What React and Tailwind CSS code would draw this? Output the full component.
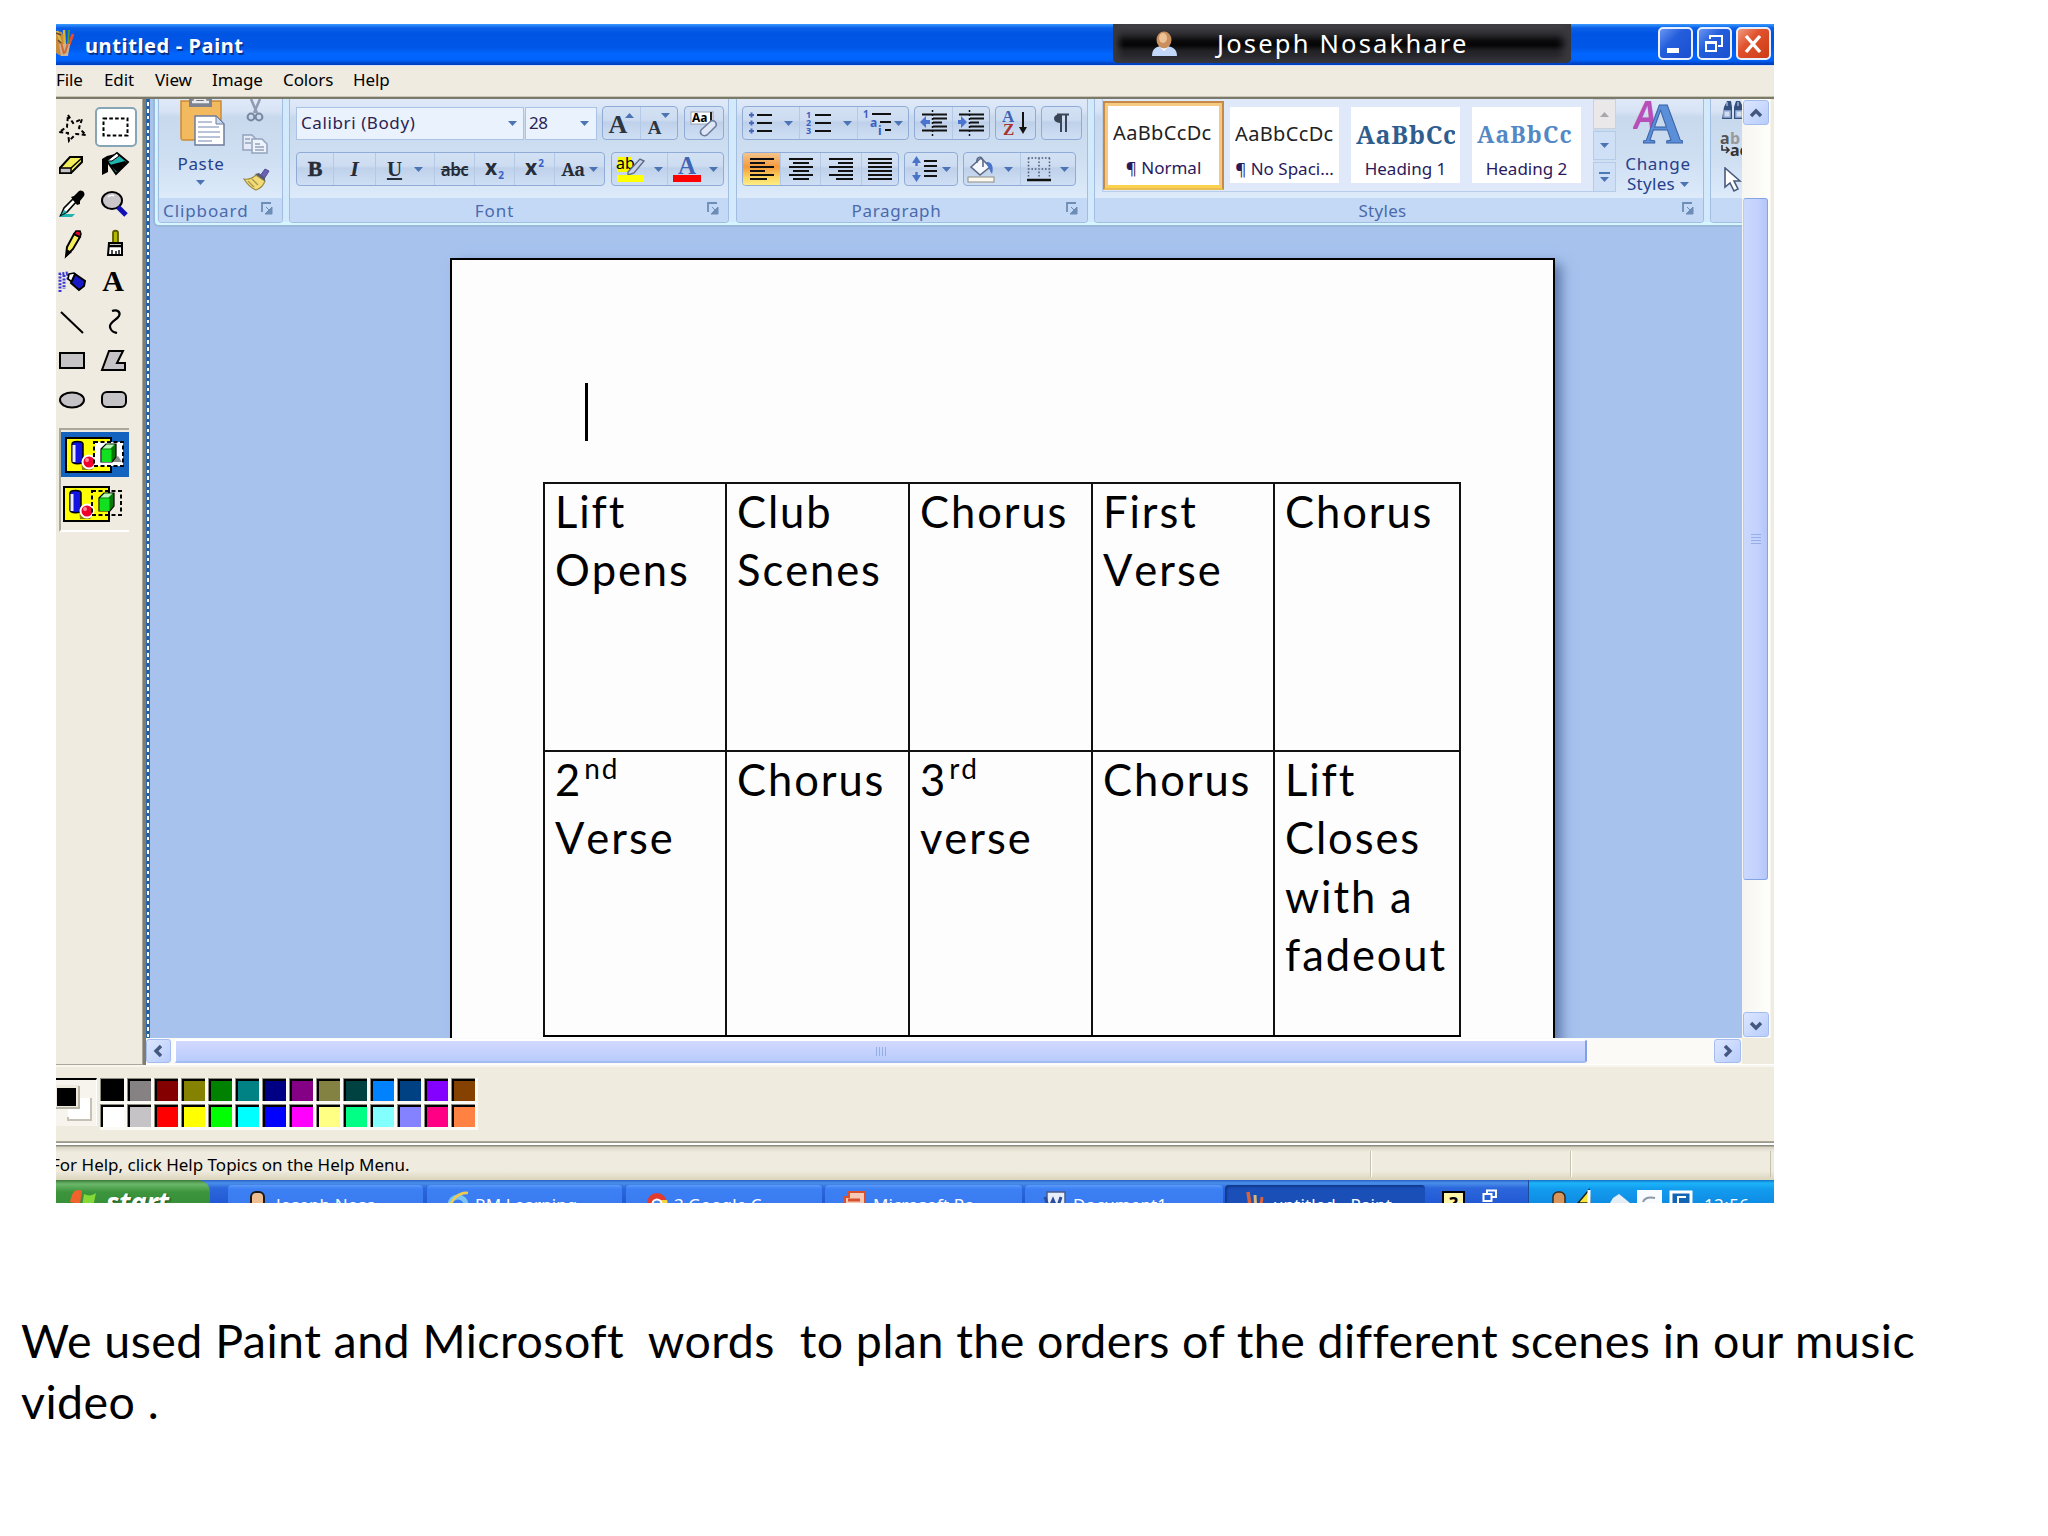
const topColors = [
    "#000000", "#868284", "#840000", "#848200", "#008200", "#008284", "#000084",
    "#840084", "#848242", "#004142", "#0082ff", "#004184", "#8400ff", "#844100",
];

const bottomColors = [
    "#ffffff", "#c6c3c6", "#ff0000", "#ffff00", "#00ff00", "#00ffff", "#0000ff",
    "#ff00ff", "#ffff84", "#00ff84", "#84ffff", "#8482ff", "#ff0084", "#ff8242",
];

const menuItems = [
    { label: "File", css: "w-[48px]" },
    { label: "Edit", css: "w-[51px]" },
    { label: "View", css: "w-[57px]" },
    { label: "Image", css: "w-[71px]" },
    { label: "Colors", css: "w-[70px]" },
    { label: "Help", css: "w-[60px]" },
];

export default function App() {

    return (

        <div className="w-[2048px] h-[1536px] bg-white overflow-hidden pt-6 font-['Noto_Sans',sans-serif] text-black">

            <div className="ml-14 w-[1718px] h-[1179px] flex flex-col overflow-hidden bg-[#efebde]">

                <TitleBar />

                {/* MENU */}
                <div className="h-[34px] shrink-0 flex items-center pb-[4px] text-[17px] leading-none border-b-2 border-[#7b7969] bg-[#efebe0] whitespace-nowrap shadow-[inset_0_1px_0_#d6e3f7,inset_0_-1px_0_#c9c5b4]">
                    {menuItems.map((item) => (
                        <span key={item.label} className={`${item.css} shrink-0 tracking-[-0.1px]`}>
                            {item.label}
                        </span>
                    ))}
                </div>

                {/* BODY */}
                <div className="h-[966px] shrink-0 flex">

                    <ToolBox />

                    <div className="w-[3px] shrink-0 bg-[#7f7d72]" />

                    <div className="w-[1628px] flex flex-col">

                        <div className="h-[939px] flex shrink-0">

                            <div className="w-[4px] shrink-0 border-x border-[#2c6aab] bg-[repeating-linear-gradient(180deg,#1f5c9c_0px,#1f5c9c_3.4px,#fff_3.4px,#fff_6.8px)]" />

                            <div className="w-[1592px] shrink-0 flex flex-col overflow-hidden">
                                <Ribbon />
                                <Document />
                            </div>

                            <VerticalScroll />

                        </div>

                        <HorizontalScroll />

                    </div>

                </div>

                <ColorBox />

                {/* STATUS */}
                <div className="h-[38px] shrink-0 flex text-[17px] border-t border-[#9c9a8c] whitespace-nowrap bg-[linear-gradient(180deg,#fff_0px,#fff_2px,#8c8a7e_2px,#8c8a7e_3px,#d8d4c4_4px,#efebde_9px,#efebde_28px,#ddd7c0_36px)]">
                    <span className="w-[1314px] shrink-0 -ml-[5px] pt-[10px] leading-[24px] tracking-[0px]">
                        For Help, click Help Topics on the Help Menu.
                    </span>
                    <div className="w-[200px] h-[26px] mt-2 ml-[5px] border-l border-[#c5c1ae] shadow-[inset_1px_0_0_#fff]" />
                    <div className="w-[201px] h-[26px] mt-2 border-x border-[#c5c1ae] shadow-[inset_1px_0_0_#fff]" />
                </div>

                <TaskBar />

            </div>

            {/* CAPTION */}
            <p className="mt-[107px] ml-[21px] w-[1990px] font-['Lato',sans-serif] text-[46.5px] leading-[61.4px] tracking-[0.46px] whitespace-pre">
                {"We used Paint and Microsoft  words  to plan the orders of the different scenes in our music\nvideo ."}
            </p>

        </div>
    );
}

function TitleBar() {

    return (

        <div className="h-[41px] shrink-0 flex bg-[linear-gradient(180deg,#3a9bff_0px,#0a5fe8_4px,#0054e3_10px,#0057e8_24px,#0066ff_30px,#0063fb_36px,#0040c0_40px)]">

            <svg width="20" height="30" viewBox="0 0 20 30" className="mt-1 shrink-0">
                <path d="M0 3l6 1 2 6 3 14-6 4-5-3z" fill="#c98a3c" />
                <path d="M1 3l5 15M8 2l1 17" stroke="#d8b83c" strokeWidth="2.4" />
                <path d="M17 6l-6 16" stroke="#e84c2c" strokeWidth="3" />
                <path d="M13 2l-1 14" stroke="#4a9a3c" strokeWidth="2" />
                <path d="M3 16h11l-2 12H5z" fill="#c8b29a" />
                <path d="M5 14l3 12M12 15l-3 10" stroke="#d66a2c" strokeWidth="2" />
                <path d="M0 5l5 2M2 12l3 3" stroke="#5a4a3c" strokeWidth="1.5" />
            </svg>

            <span className="ml-[9px] w-[1028px] shrink-0 text-[20px] font-bold text-white leading-[43px] tracking-[0.62px] [text-shadow:1.5px_1.5px_0_#0a2f86]">
                untitled - Paint
            </span>

            {/* USER BADGE */}
            <div className="w-[458px] h-[39px] shrink-0 rounded-b-[5px] flex items-center bg-[linear-gradient(180deg,#4a4a4e_0px,#2d2d31_10px,#0a0a0c_17px,#050506_21px,#222226_27px,#333338_39px)] shadow-[inset_6px_0_6px_#3a3a3f,inset_-8px_0_8px_#3a3a3f]">
                <svg width="28" height="28" viewBox="0 0 28 28" className="ml-[38px] shrink-0">
                    <path d="M1 26c0-8 5-10 12-10s13 2 13 10z" fill="#c3d7fb" />
                    <path d="M8 16l5 5 5-5z" fill="#fff" />
                    <ellipse cx="13" cy="10" rx="7.5" ry="8.5" fill="#c98f5e" />
                    <ellipse cx="12" cy="8" rx="4" ry="5" fill="#ecc296" />
                </svg>
                <span className="ml-[38px] text-[25.5px] leading-none text-white tracking-[2.2px] whitespace-nowrap">
                    Joseph Nosakhare
                </span>
            </div>

            <div className="ml-[87px] mt-[3px] flex gap-1">
                <WindowButton css="bg-[linear-gradient(135deg,#6a95f2,#245edc_40%,#1b4fd0)]">
                    <path d="M8 21h12v5H8z" fill="#fff" />
                </WindowButton>
                <WindowButton css="bg-[linear-gradient(135deg,#6a95f2,#245edc_40%,#1b4fd0)]">
                    <path d="M12 12V9h12v10h-4M12 9h12" fill="none" stroke="#fff" strokeWidth="2" />
                    <path d="M8 15h10v9H8zM8 16h10" fill="none" stroke="#fff" strokeWidth="2" />
                </WindowButton>
                <WindowButton css="bg-[linear-gradient(135deg,#f09a80,#e0512c_40%,#cc3d16)]">
                    <path d="M9 9l14 16M23 9L9 25" stroke="#fff" strokeWidth="3.4" />
                </WindowButton>
            </div>

        </div>
    );
}

function WindowButton({ css, children }) {

    return (

        <div className={`w-[35px] h-[33px] shrink-0 rounded-[5px] border-2 border-[#e9f0ff] ${css}`}>
            <svg width="31" height="29" viewBox="1 2 31 29">
                {children}
            </svg>
        </div>
    );
}

function ToolBox() {

    return (

        <div className="w-[87px] shrink-0 bg-[#efebe0] border-r border-b border-[#aca899] pt-[7px]">

            {/* TOOLS */}
            <div className="grid grid-cols-[39px_42px] auto-rows-[39.2px]">

                <Tool>
                    <path d="M12 6l5 8 9-4-3 9 7 7-10-1-7 7-1-8-9-1 8-5z" fill="none" stroke="#000" strokeWidth="2" strokeDasharray="4 2.5" />
                </Tool>

                <div className="w-[42px] h-[40px] mt-px rounded-[5px] border-2 border-[#86a6b8] bg-white flex items-center justify-center">
                    <svg width="28" height="20" viewBox="0 0 28 20">
                        <rect x="1.5" y="1.5" width="24" height="17" fill="none" stroke="#000" strokeWidth="2" strokeDasharray="3.6 2.2" />
                    </svg>
                </div>

                <Tool>
                    <path d="M4 20L14 9h12v5L15 25H4z" fill="#f4ee5a" stroke="#000" strokeWidth="2" />
                    <path d="M4 20h11v5H4z" fill="#c6c3c6" stroke="#000" strokeWidth="1.5" />
                    <path d="M15 20L26 10" stroke="#000" strokeWidth="1.5" />
                </Tool>
                <Tool right>
                    <path d="M2 27V11l5-3 8-2-7 7v11z" fill="#000" />
                    <path d="M7 13L17 5l11 9-12 12z" fill="#1fb4b0" stroke="#000" strokeWidth="2" />
                    <path d="M7 13L17 5l2 3-7 5z" fill="#fff" stroke="#000" />
                    <path d="M10 17l15-4 2 3-10 8z" fill="#000" />
                </Tool>

                <Tool>
                    <path d="M4 27h15l-3 3H3z" fill="#1fb4b0" />
                    <path d="M5 28l3-7 9-9 3 3-9 10z" fill="#fff" stroke="#000" strokeWidth="1.6" />
                    <path d="M5 28l3-5 3 2z" fill="#1fb4b0" />
                    <path d="M15 10l3-1 5-5c3-2 7 2 5 5l-4 5 0 3-3 1z" fill="#000" />
                </Tool>
                <Tool right>
                    <ellipse cx="12" cy="13.500" rx="10" ry="8.500" fill="#c9c5c8" stroke="#000" strokeWidth="2" />
                    <path d="M8 10c2-2 5-2 6-1" stroke="#fff" strokeWidth="1.5" fill="none" />
                    <path d="M18 20l8 8" stroke="#1010b8" strokeWidth="5" />
                </Tool>

                <Tool>
                    <path d="M10 29l1-9 7-13 6 3-7 12z" fill="#f4ee5a" stroke="#000" strokeWidth="2" />
                    <path d="M18 7l2-3h4l1 3-1 3z" fill="#e4002c" stroke="#000" strokeWidth="1.5" />
                    <path d="M10 30v-8l6 3z" fill="#000" />
                </Tool>
                <Tool right>
                    <path d="M13 16V6c0-3 5-3 5 0v10z" fill="#b5b800" stroke="#5a5a00" strokeWidth="1.8" />
                    <path d="M9 16h13v12H8z" fill="#fff" stroke="#000" strokeWidth="2" />
                    <path d="M9 19h13" stroke="#000" strokeWidth="2.5" />
                    <path d="M12 23v5M16 24v4M19 23v5" stroke="#000" strokeWidth="1.4" />
                </Tool>

                <Tool>
                    <path d="M4 26V8l8-1M8 9v14M12 8v6" stroke="#3838d8" strokeWidth="3" strokeDasharray="2 1.4" fill="none" />
                    <path d="M13 8l5-1 2 2-4 7-4-3z" fill="#fff" stroke="#000" strokeWidth="1.6" />
                    <path d="M19 8l10 7-1 5-5 4-8-7z" fill="#1818c8" stroke="#000" strokeWidth="2" />
                </Tool>
                <Tool right>
                    <text x="13" y="25" textAnchor="middle" fontFamily="Liberation Serif, serif" fontWeight="bold" fontSize="30">A</text>
                </Tool>

                <Tool>
                    <path d="M5 7l22 21" stroke="#000" strokeWidth="2" />
                </Tool>
                <Tool right>
                    <path d="M12 6c5-2 9 1 7 5s-10 6-9 11 4 5 7 6" fill="none" stroke="#000" strokeWidth="2.2" />
                </Tool>

                <Tool>
                    <rect x="4" y="9" width="24" height="15" fill="#c6c3c6" stroke="#000" strokeWidth="2" />
                </Tool>
                <Tool right>
                    <path d="M9 7h14l-6 12h8v7H2z" fill="#c6c3c6" stroke="#000" strokeWidth="2" />
                </Tool>

                <Tool>
                    <ellipse cx="16" cy="17" rx="12" ry="7.5" fill="#c6c3c6" stroke="#000" strokeWidth="2" />
                </Tool>
                <Tool right>
                    <rect x="2" y="9" width="24" height="15" rx="5" fill="#c6c3c6" stroke="#000" strokeWidth="2" />
                </Tool>

            </div>

            {/* OPTIONS */}
            <div className="mt-[8px] ml-[3px] w-[70px] h-[104px] border-t-2 border-l-2 border-[#aca899] border-b-2 border-b-white pt-[2px]">
                <div className="w-[68px] h-[45px] bg-[#1464bf] pl-1 pt-[5px]">
                    <Shapes filled />
                </div>
                <div className="pl-0.5 pt-[9px]">
                    <Shapes />
                </div>
            </div>

        </div>
    );
}

function Tool({ right, children }) {

    return (

        <svg width="32" height="34" viewBox="0 0 32 34" className={`mt-[3px] shrink-0 ${right ? "ml-[5px]" : ""}`}>
            {children}
        </svg>
    );
}

function Shapes({ filled }) {

    return (

        <svg width="62" height="37" viewBox="0 0 62 37">
            <rect x="1" y="1" width="45" height="34" fill="#ffff00" stroke="#000" strokeWidth="2" />
            <path d="M16 20l14 9-3 4H17z" fill="#8a8600" />
            <path d="M7 7c0-3.500 11-3.500 11 0v17c0 3.500-11 3.500-11 0z" fill="#1414e0" stroke="#000" strokeWidth="1.5" />
            <path d="M9 8v17" stroke="#e8e8ff" strokeWidth="3" />
            {filled && <rect x="30" y="5" width="28" height="24" fill="#fff" />}
            <circle cx="24" cy="25" r="6.5" fill="#f0002c" stroke="#fff" strokeWidth="2" />
            <circle cx="22" cy="23" r="2" fill="#ff8aa0" />
            <rect x="29" y="5" width="29" height="24" fill="none" stroke="#000" strokeWidth="2" strokeDasharray="4 2.5" />
            <path d="M45 25h12l-4-6z" fill="#8c8c8c" opacity={filled ? 1 : 0} />
            <path d="M36 12l5-5h10v13l-4 5H36z" fill="#067a06" stroke="#000" strokeWidth="1.2" />
            <path d="M36.500 12.500h10V25h-10z" fill="#10e020" />
            <path d="M37.500 11.500l4-4h8l-4 4z" fill="#b8f8b8" />
        </svg>
    );
}

function Ribbon() {

    return (

        <div className="h-[128px] shrink-0 pl-[3px] bg-[#a6c2ed] overflow-hidden">

            <div className="h-[128px] w-[1600px] pl-[5px] flex rounded-bl-md border-l-2 border-b-2 border-[#9ab8d8] bg-[#d3e9fc] shadow-[inset_2px_-3px_0_#d6f6ff]">

                {/* CLIPBOARD */}
                <Group css="w-[125px] -ml-[2px]" label="Clipboard" labelCss="pl-[4px] text-left tracking-[0.9px]">

                    <div className="flex">

                        <div className="w-[83px] flex flex-col items-center">
                            <svg width="46" height="47" viewBox="0 0 46 47" className="ml-[2px]">
                                <path d="M2 2h40v37c0 2-1 2-3 2H4c-2 0-2-1-2-3z" fill="#f3b95e" stroke="#c98b36" strokeWidth="1.5" />
                                <path d="M10 0h23v8H10z" fill="#7d8490" />
                                <path d="M13 3h17M16 0h10v3H16z" stroke="#e8eaf0" strokeWidth="2.4" />
                                <path d="M16 17h21l8 8v21H16z" fill="#fff" stroke="#6d7c9c" strokeWidth="1.5" />
                                <path d="M37 17v8h8z" fill="#cfdaf0" stroke="#6d7c9c" />
                                <path d="M19 23h14M19 28h21M19 33h22M19 38h22M19 42h14" stroke="#a3b0cc" strokeWidth="1.6" />
                            </svg>
                            <span className="mt-[5px] ml-px text-[17px] leading-[26px] tracking-[0.7px] text-[#27408b]">
                                Paste
                            </span>
                            <span className="mt-[3px]"><Arrow /></span>
                        </div>

                        <div className="flex flex-col">
                            <svg width="28" height="26" viewBox="0 0 28 26">
                                <path d="M9 0l6 14M18 0l-6 14" stroke="#8f9bb0" strokeWidth="2.5" />
                                <circle cx="9" cy="18" r="3.4" fill="none" stroke="#78869f" strokeWidth="2" />
                                <circle cx="17" cy="18" r="3.4" fill="none" stroke="#78869f" strokeWidth="2" />
                            </svg>
                            <svg width="28" height="22" viewBox="0 0 28 22" className="mt-2">
                                <path d="M1 2h9l4 4v11H1z" fill="#e4ebf6" stroke="#93a2bd" strokeWidth="1.5" />
                                <path d="M10 6h10l5 5v9H10z" fill="#eef3fb" stroke="#93a2bd" strokeWidth="1.5" />
                                <path d="M3 6h5M3 10h6M13 11h5M13 14h9M13 17h9" stroke="#93a2bd" strokeWidth="1.5" />
                            </svg>
                            <svg width="28" height="26" viewBox="0 0 28 26" className="mt-3">
                                <path d="M18 9l5-7 4 2-5 8z" fill="#6a63b5" stroke="#514b96" />
                                <path d="M2 12c5 1 9-1 12-4l9 6c-2 6-6 8-9 9C9 21 5 17 2 12z" fill="#f3dc78" stroke="#9b8a3c" strokeWidth="1.2" />
                                <path d="M14 8l9 6M6 14l6 6M10 12l6 6" stroke="#a99a50" strokeWidth="1.4" />
                                <path d="M13 7l4-1 6 5v3z" fill="#565a72" />
                            </svg>
                        </div>

                    </div>

                </Group>

                {/* FONT */}
                <Group css="w-[440px] ml-[6px]" label="Font" labelCss="pr-[20px] text-center tracking-[0.9px]">

                    <div className="pt-[7px] pl-[6px] flex flex-col gap-[12px]">

                        <div className="h-[34px] flex items-center">
                            <div className="w-[228px] h-[33px] border border-[#a9c2e6] bg-[#eaf2fd] flex items-center justify-between pl-1 pr-[6px] text-[17px] tracking-[0.6px] text-[#2b2350]">
                                Calibri (Body)
                                <Arrow />
                            </div>
                            <div className="w-[72px] h-[33px] ml-[1px] border border-[#a9c2e6] bg-[#eaf2fd] flex items-center justify-between pl-[3px] pr-[7px] text-[17px] tracking-[-0.4px] text-[#2b2350]">
                                28
                                <Arrow />
                            </div>
                            <Box css="ml-[5px] w-[76px]">
                                <Cell css="w-[38px]">
                                    <span className="font-['Liberation_Serif',serif] font-bold text-[26px] text-[#2c3540] mt-1">A</span>
                                    <span className="-ml-0.5 mb-4"><Arrow up /></span>
                                </Cell>
                                <Cell css="w-[36px]">
                                    <span className="font-['Liberation_Serif',serif] font-bold text-[19px] text-[#2c3540] mt-2">A</span>
                                    <span className="mb-4"><Arrow /></span>
                                </Cell>
                            </Box>
                            <Box css="ml-[6px] w-[40px]">
                                <svg width="32" height="30" viewBox="0 0 32 30" className="mx-auto">
                                    <rect x="3" y="4" width="22" height="12" fill="#fff" stroke="#9aa4b4" />
                                    <text x="4" y="14" fontSize="12" fontWeight="bold" fontFamily="Noto Sans">Aa</text>
                                    <path d="M23 4v11" stroke="#222" strokeWidth="2" />
                                    <path d="M13 22l10-9c4-1 6 2 5 5l-9 9c-4 2-8-1-6-5z" fill="#dfe6f6" stroke="#6c7c9c" strokeWidth="1.5" />
                                </svg>
                            </Box>
                        </div>

                        <div className="h-[34px] flex items-center">
                            <Box css="w-[309px] text-[#262c38]">
                                <Cell css="w-[37px]">
                                    <span className="font-['Liberation_Serif',serif] font-bold text-[22px] [-webkit-text-stroke:0.5px]">B</span>
                                </Cell>
                                <Cell css="w-[42px]">
                                    <span className="font-['Liberation_Serif',serif] font-bold italic text-[22px]">I</span>
                                </Cell>
                                <Cell css="w-[59px] gap-3">
                                    <span className="font-['Liberation_Serif',serif] font-bold underline text-[21px]">U</span>
                                    <Arrow />
                                </Cell>
                                <Cell css="w-[40px]">
                                    <span className="line-through text-[17px] font-semibold tracking-[-0.6px]">abc</span>
                                </Cell>
                                <Cell css="w-[40px]">
                                    <span className="font-bold text-[21px] -mt-1">x</span>
                                    <span className="font-bold text-[10px] text-[#3a62c4] mt-3 ml-px">2</span>
                                </Cell>
                                <Cell css="w-[40px]">
                                    <span className="font-bold text-[21px] -mt-1">x</span>
                                    <span className="font-bold text-[10px] text-[#3a62c4] mb-3 ml-px">2</span>
                                </Cell>
                                <Cell css="w-[49px] gap-1">
                                    <span className="font-['Noto_Serif',serif] font-bold text-[18px] tracking-[-0.5px]">Aa</span>
                                    <Arrow />
                                </Cell>
                            </Box>
                            <Box css="ml-[6px] w-[113px]">
                                <Cell css="w-[56px] gap-2">
                                    <svg width="30" height="30" viewBox="0 0 30 30">
                                        <rect x="1" y="3" width="15" height="15" fill="#f8f800" />
                                        <text x="0" y="15" fontSize="16" fontFamily="Noto Sans">ab</text>
                                        <path d="M12 18l12-13 4 2-10 12-6 2z" fill="#c8d4ea" stroke="#5d6b86" strokeWidth="1.4" />
                                        <rect x="1" y="21" width="27" height="7" fill="#ffff00" />
                                    </svg>
                                    <Arrow />
                                </Cell>
                                <Cell css="w-[55px] gap-2">
                                    <svg width="28" height="30" viewBox="0 0 28 30">
                                        <text x="14" y="20" textAnchor="middle" fontSize="25" fontWeight="bold" fill="#3f64b4" fontFamily="Liberation Serif">A</text>
                                        <rect x="0" y="21" width="28" height="7" fill="#fe0000" />
                                    </svg>
                                    <Arrow />
                                </Cell>
                            </Box>
                        </div>

                    </div>

                </Group>

                {/* PARAGRAPH */}
                <Group css="w-[352px] ml-[7px]" label="Paragraph" labelCss="pr-[22px] text-center tracking-[0.7px]">

                    <div className="pt-[7px] pl-[5px] flex flex-col gap-[12px]">

                        <div className="h-[34px] flex items-center">
                            <Box css="w-[167px]">
                                <Cell css="w-[57px] gap-[11px]">
                                    <svg width="24" height="24" viewBox="0 0 24 24">
                                        <path d="M8 4h15M8 12h15M8 20h15" stroke="#111" strokeWidth="2" />
                                        <path d="M0 4h5M0 12h5M0 20h5M2.500 1.500v5M2.500 9.500v5M2.500 17.500v5" stroke="#4a68c0" strokeWidth="2" />
                                    </svg>
                                    <Arrow />
                                </Cell>
                                <Cell css="w-[58px] gap-[11px]">
                                    <svg width="26" height="24" viewBox="0 0 26 24">
                                        <path d="M9 4h16M9 12h16M9 20h16" stroke="#111" strokeWidth="2" />
                                        <text x="0" y="7" fontSize="9" fontWeight="bold" fill="#3c5ec0">1</text>
                                        <text x="0" y="15" fontSize="9" fontWeight="bold" fill="#3c5ec0">2</text>
                                        <text x="0" y="23" fontSize="9" fontWeight="bold" fill="#3c5ec0">3</text>
                                    </svg>
                                    <Arrow />
                                </Cell>
                                <Cell css="w-[50px] gap-px">
                                    <svg width="30" height="26" viewBox="0 0 30 26">
                                        <path d="M9 4h19M17 12h11M22 20h6" stroke="#111" strokeWidth="2" />
                                        <text x="0" y="8" fontSize="10" fontWeight="bold" fill="#3c5ec0">1</text>
                                        <text x="7" y="17" fontSize="12" fontWeight="bold" fill="#3c5ec0">a</text>
                                        <text x="15" y="25" fontSize="12" fontWeight="bold" fill="#3c5ec0">i</text>
                                    </svg>
                                    <Arrow />
                                </Cell>
                            </Box>
                            <Box css="ml-[5px] w-[76px]">
                                <Cell css="w-[38px]"><Indent /></Cell>
                                <Cell css="w-[36px]"><Indent right /></Cell>
                            </Box>
                            <Box css="ml-[5px] w-[41px]">
                                <svg width="28" height="28" viewBox="0 0 28 28" className="mx-auto">
                                    <text x="0" y="13" fontSize="17" fontWeight="bold" fill="#3d62b4" fontFamily="Liberation Serif">A</text>
                                    <text x="1" y="26" fontSize="17" fontWeight="bold" fill="#a8322c" fontFamily="Liberation Serif">Z</text>
                                    <path d="M21 3v20" stroke="#111" strokeWidth="2" />
                                    <path d="M17 18h8l-4 7z" fill="#111" />
                                </svg>
                            </Box>
                            <Box css="ml-[5px] w-[41px]">
                                <svg width="20" height="22" viewBox="0 0 20 22" className="mx-auto">
                                    <path d="M8 2C0 2 0 11 8 11z" fill="#3a4658" />
                                    <path d="M5 2.500h12M9 2v18M14 2v18" stroke="#3a4658" strokeWidth="2" />
                                </svg>
                            </Box>
                        </div>

                        <div className="h-[34px] flex items-center">
                            <Box css="w-[157px]">
                                <Cell css="w-[38px] bg-[linear-gradient(180deg,#f3c58d_0px,#f59a3c_14px,#fbd35e_24px,#fdf08a_33px)]"><Lines d="M1 3h24M1 7h15M1 11h24M1 15h15M1 19h24M1 23h17" /></Cell>
                                <Cell css="w-[40px]"><Lines d="M1 3h24M5 7h16M1 11h24M5 15h16M1 19h24M5 23h16" /></Cell>
                                <Cell css="w-[41px]"><Lines d="M1 3h24M10 7h15M1 11h24M10 15h15M1 19h24M8 23h17" /></Cell>
                                <Cell css="w-[36px]"><Lines d="M1 3h24M1 7h24M1 11h24M1 15h24M1 19h24M1 23h24" /></Cell>
                            </Box>
                            <Box css="ml-[5px] w-[54px]">
                                <Cell css="w-[52px] gap-[3px]">
                                    <svg width="28" height="28" viewBox="0 0 28 28">
                                        <path d="M13 6h13M13 11h13M13 16h13M13 21h13" stroke="#111" strokeWidth="2" />
                                        <path d="M5.500 3v8M5.500 17v8" stroke="#4a74c8" strokeWidth="2.4" />
                                        <path d="M1 8l4.500-7L10 8zM1 20l4.500 7 4.500-7z" fill="#4a74c8" />
                                    </svg>
                                    <Arrow />
                                </Cell>
                            </Box>
                            <Box css="ml-[5px] w-[113px]">
                                <Cell css="w-[57px] gap-[7px] pr-1">
                                    <svg width="30" height="28" viewBox="0 0 30 28">
                                        <path d="M4 12L14 3l9 9-10 8z" fill="#f4f7fc" stroke="#5c6a86" strokeWidth="1.6" />
                                        <path d="M10 8c-1-7 6-8 6-1v5" fill="none" stroke="#5c6a86" strokeWidth="1.6" />
                                        <path d="M19 7c6-1 8 5 6 12-2-2-2-5-4-7z" fill="#4a74c8" />
                                        <rect x="1" y="22" width="26" height="5" fill="#fbf8ee" stroke="#8d8d84" />
                                    </svg>
                                    <Arrow />
                                </Cell>
                                <Cell css="w-[54px] gap-[9px]">
                                    <svg width="24" height="26" viewBox="0 0 24 26">
                                        <path d="M1 2h22M1 13h22M1.500 2v20M12 2v20M22.500 2v20" stroke="#4e5a78" strokeWidth="1.5" strokeDasharray="1.6 1.800" />
                                        <path d="M0 24h24" stroke="#111" strokeWidth="2.4" />
                                    </svg>
                                    <Arrow />
                                </Cell>
                            </Box>
                        </div>

                    </div>

                </Group>

                {/* STYLES */}
                <Group css="w-[610px] ml-[6px]" label="Styles" labelCss="pr-[24px] text-center tracking-[0.3px]">

                    <div className="flex">

                        <div className="ml-[7px] w-[491px] h-[93px] shrink-0 flex border-l border-b border-[#b8cde9] bg-[#dfe9f9]">
                            <div className="mt-[2px] w-[121px] h-[89px] shrink-0 border-2 border-[#c58a45] border-b-[#e8bd55]">
                                <div className="w-full h-full border-[3px] border-[#f6c983] border-b-[#fbd14e]">
                                    <StyleCard sample="AaBbCcDc" name="¶ Normal" sampleCss="text-[20px] text-[#222] tracking-[0.35px]" />
                                </div>
                            </div>
                            <div className="mt-2 ml-[6px] w-[109px] h-[76px]">
                                <StyleCard sample="AaBbCcDc" name="¶ No Spaci..." sampleCss="text-[20px] text-[#222] tracking-[0.35px]" />
                            </div>
                            <div className="mt-2 ml-[12px] w-[109px] h-[76px]">
                                <StyleCard sample="AaBbCc" name="Heading 1" sampleCss="font-['Noto_Serif','DejaVu_Serif',serif] font-bold text-[25px] text-[#2f5d8f] tracking-[0.7px]" />
                            </div>
                            <div className="mt-2 ml-[12px] w-[109px] h-[76px]">
                                <StyleCard sample="AaBbCc" name="Heading 2" sampleCss="font-['Noto_Serif','DejaVu_Serif',serif] font-bold text-[23px] text-[#5488c4] tracking-[1.1px]" />
                            </div>
                        </div>

                        <div className="w-[23px] shrink-0 flex flex-col gap-[2px]">
                            <div className="h-[30px] bg-[#ebe8ea] border border-[#ccd2dd] flex items-center justify-center"><Arrow up gray /></div>
                            <div className="h-[29px] bg-[#cfe0f6] border border-[#b4cbe9] flex items-center justify-center"><Arrow /></div>
                            <div className="h-[30px] bg-[#cfe0f6] border border-[#b4cbe9] flex flex-col gap-[3px] items-center justify-center">
                                <div className="w-[11px] h-[2px] bg-[#4c7ab8]" />
                                <Arrow />
                            </div>
                        </div>

                        <div className="w-[84px] flex flex-col items-center text-[17px] leading-[20px] tracking-[0.7px] text-[#27408b]">
                            <svg width="50" height="46" viewBox="0 0 50 46">
                                <text x="0" y="30" fontSize="40" fontWeight="bold" fill="#b84fb8" fontFamily="Liberation Sans" fontStyle="italic" textLength="25" lengthAdjust="spacingAndGlyphs">A</text>
                                <text x="10" y="44" fontSize="56" fontWeight="bold" fill="#5b8fd8" stroke="#3a62a8" strokeWidth="1" fontFamily="Liberation Serif">A</text>
                            </svg>
                            <span className="mt-[9px]">Change</span>
                            <span className="flex items-center gap-[5px] tracking-[0.3px]">Styles <Arrow /></span>
                        </div>

                    </div>

                </Group>

                {/* EDITING */}
                <Group css="w-[80px] ml-[6px]" label="" labelCss="">
                    <div className="pl-[9px] flex flex-col">
                        <svg width="28" height="24" viewBox="0 0 28 24">
                            <path d="M2 20l2-12 3-6h4l1 6v12zM14 20V8l2-6h4l3 6 2 12z" fill="#34507f" />
                            <path d="M4 12h6v6H4zM16 12h6v6h-6zM7 3v4M18 3v4" fill="#d2def0" stroke="#9cb2d8" strokeWidth="1.5" />
                        </svg>
                        <svg width="32" height="26" viewBox="0 0 32 26" className="mt-[8px]">
                            <text x="0" y="13" fontSize="16" fontWeight="bold" fill="#555">a</text>
                            <text x="10" y="13" fontSize="16" fontWeight="bold" fill="#999">b</text>
                            <text x="10" y="25" fontSize="16" fontWeight="bold" fill="#333">ac</text>
                            <path d="M2 14v5h7M6 16l3 3-3 3" stroke="#333" strokeWidth="1.6" fill="none" />
                        </svg>
                        <svg width="20" height="26" viewBox="0 0 20 26" className="mt-[10px] ml-1">
                            <path d="M1 1v19l5-4 4 8 4-2-4-8h6z" fill="#fff" stroke="#4a5a7c" strokeWidth="1.6" />
                        </svg>
                    </div>
                </Group>

            </div>

        </div>
    );
}

function Group({ css, label, labelCss, children }) {

    return (

        <div className={`h-[124px] shrink-0 flex flex-col rounded-b-[4px] border border-t-0 border-[#a3bde0] overflow-hidden ${css}`}>
            <div className="h-[99px] shrink-0 bg-[linear-gradient(180deg,#dfe9f8_0px,#d8e4f5_12px,#c9d9ed_18px,#cfdff2_60px,#dceafa_98px)]">
                {children}
            </div>
            <div className="h-[24px] shrink-0 flex items-center bg-[#c4d9f6] pr-2">
                <span className={`flex-1 pt-px text-[17px] leading-[23px] text-[#4a6aab] ${labelCss}`}>
                    {label}
                </span>
                {label && (
                    <svg width="13" height="13" viewBox="0 0 13 13" className="-ml-3 -mt-1 shrink-0">
                        <path d="M1 10V1h9" fill="none" stroke="#6d8db5" strokeWidth="1.8" />
                        <path d="M5 5l5 5M11 5v7H4z" fill="#6d8db5" stroke="#6d8db5" />
                    </svg>
                )}
            </div>
        </div>
    );
}

function Box({ css, children }) {

    return (

        <div className={`h-[34px] shrink-0 flex items-center overflow-hidden rounded-[4px] border border-[#8fabd6] bg-[linear-gradient(180deg,#d3e1f4_0px,#cddcf0_13px,#bfd1ea_15px,#cfe0f5_33px)] ${css}`}>
            {children}
        </div>
    );
}

function Cell({ css, children }) {

    return (

        <div className={`h-full shrink-0 flex items-center justify-center leading-none border-r border-[#b4c9e6] last:border-r-0 ${css}`}>
            {children}
        </div>
    );
}

function Arrow({ up, gray }) {

    return (

        <svg width="9" height="5" viewBox="0 0 9 5" className="shrink-0">
            <path d={up ? "M0 5l4.500-5L9 5z" : "M0 0h9L4.500 5z"} fill={gray ? "#a8a8ac" : "#4c74b4"} />
        </svg>
    );
}

function Lines({ d }) {

    return (

        <svg width="26" height="26" viewBox="0 0 26 26">
            <path d={d} stroke="#111" strokeWidth="1.800" />
        </svg>
    );
}

function Indent({ right }) {

    return (

        <svg width="28" height="26" viewBox="0 0 28 26">
            <path d="M2 4.500h25M13 8.500h14M13 12.500h9M13 16.500h14M2 20.500h25" stroke="#111" strokeWidth="2" />
            <path d="M12.500 0v26" stroke="#111" strokeWidth="1.5" strokeDasharray="2 2" />
            <path d={right ? "M10 12L4 6v4H1v4h3v4z" : "M0 12l6-6v4h4v4H6v4z"} fill="#4a74d0" />
        </svg>
    );
}

function StyleCard({ sample, name, sampleCss }) {

    return (

        <div className="w-full h-full bg-white flex flex-col overflow-hidden whitespace-nowrap">
            <div className={`mx-[5px] mt-[12px] h-[30px] overflow-hidden leading-[30px] ${sampleCss}`}>
                {sample}
            </div>
            <div className="mt-[7px] text-center text-[17px] leading-[26px] text-[#2a1a5c]">
                {name}
            </div>
        </div>
    );
}

function Document() {

    return (

        <div className="h-[811px] shrink-0 bg-[#a6c2ed] pt-[31px] pl-[300px] overflow-hidden">

            <div className="w-[1105px] h-[790px] bg-[#fdfdfe] border-2 border-b-0 border-black pl-[91px] shadow-[8px_4px_12px_-2px_#5a74a8]">

                <div className="ml-[42px] pt-[123px] h-[222px]">
                    <div className="w-[3px] h-[58px] bg-black" />
                </div>

                {/* TABLE */}
                <div className="w-[918px] grid grid-cols-[182px_183px_183px_182px_188px] grid-rows-[268px_285px] border-b-2 border-black font-['Lato',sans-serif] text-[43.5px] leading-[58.4px] tracking-[1.9px] [font-kerning:none] whitespace-pre">
                    <TableCell>{"Lift\nOpens"}</TableCell>
                    <TableCell>{"Club\nScenes"}</TableCell>
                    <TableCell>Chorus</TableCell>
                    <TableCell>{"First\nVerse"}</TableCell>
                    <TableCell last>Chorus</TableCell>
                    <TableCell>
                        2<Sup>nd</Sup>{"\nVerse"}
                    </TableCell>
                    <TableCell>Chorus</TableCell>
                    <TableCell>
                        3<Sup>rd</Sup>{"\nverse"}
                    </TableCell>
                    <TableCell>Chorus</TableCell>
                    <TableCell last>{"Lift\nCloses\nwith a\nfadeout"}</TableCell>
                </div>

            </div>

        </div>
    );
}

function TableCell({ last, children }) {

    return (

        <div className={`pl-[10px] border-l-2 border-t-2 border-[#111] ${last ? "border-r-2" : ""}`}>
            <div className="-mt-[2px]">
                {children}
            </div>
        </div>
    );
}

function Sup({ children }) {

    return (

        <span className="inline-block leading-none text-[28px] -translate-y-[17px] ml-0.5 tracking-[2px]">
            {children}
        </span>
    );
}

function VerticalScroll() {

    return (

        <div className="w-[32px] shrink-0 flex flex-col items-center pr-[5px] pt-px bg-[linear-gradient(90deg,#f6f5f0_0px,#fefefb_28px,#efebde_29px)]">
            <ScrollButton css="w-[26px] h-[25px]" d="M8 14l5-5 5 5" />
            <div className="mt-[73px] w-[25px] h-[682px] rounded-[3px] border border-[#84a4e8] border-l-[#b8cbf6] bg-[linear-gradient(90deg,#cbd8fd,#c3d1fd_60%,#b4c6f7)] flex flex-col items-center justify-center gap-[2px]">
                <div className="w-[10px] h-px bg-[#96aee8]" />
                <div className="w-[10px] h-px bg-[#96aee8]" />
                <div className="w-[10px] h-px bg-[#96aee8]" />
                <div className="w-[10px] h-px bg-[#96aee8]" />
            </div>
            <ScrollButton css="mt-[132px] w-[26px] h-[25px]" d="M8 9l5 5 5-5" />
        </div>
    );
}

function HorizontalScroll() {

    return (

        <div className="h-[27px] shrink-0 flex items-center bg-[linear-gradient(90deg,#fbfaf7_0px,#fbfaf7_1596px,#efebde_1596px)] border-b border-white">
            <ScrollButton css="w-[25px] h-[24px]" d="M15 6l-5 5 5 5" />
            <div className="ml-[3px] w-[1413px] h-[24px] rounded-[3px] border-2 border-[#fff] border-r-[#7f9fe6] border-b-[#a4bcf2] bg-[linear-gradient(180deg,#d3d9ff,#c3d1fd_60%,#b8ccfb)] flex items-center justify-center gap-[2px]">
                <div className="w-px h-[9px] bg-[#96aee8]" />
                <div className="w-px h-[9px] bg-[#96aee8]" />
                <div className="w-px h-[9px] bg-[#96aee8]" />
                <div className="w-px h-[9px] bg-[#96aee8]" />
            </div>
            <ScrollButton css="ml-[127px] w-[27px] h-[24px]" d="M10 6l5 5-5 5" />
        </div>
    );
}

function ScrollButton({ css, d }) {

    return (

        <div className={`shrink-0 rounded-[3px] border border-[#a4bcf0] bg-[linear-gradient(135deg,#dce6ff,#b9cdfb)] flex items-center justify-center ${css}`}>
            <svg width="26" height="22" viewBox="0 0 26 22" className="shrink-0">
                <path d={d} fill="none" stroke="#44587f" strokeWidth="3.4" />
            </svg>
        </div>
    );
}

function ColorBox() {

    return (

        <div className="h-[77px] shrink-0 flex pt-[13px] border-b border-[#aca899] shadow-[inset_0_2px_0_#f8f6ef]">

            <div className="w-[41px] h-[48px] shrink-0 border-t-2 border-black bg-[#f6f4ec] border-r border-r-[#fff]">
                <svg width="40" height="46" viewBox="0 0 40 46">
                    <path d="M12 18h23v22H12z" fill="#fff" />
                    <path d="M35 18v22H12v-3" fill="none" stroke="#c5c1b4" strokeWidth="2" />
                    <path d="M0 5h23v24H0z" fill="#efebde" />
                    <path d="M23 6v22H0" fill="none" stroke="#b8b4a6" strokeWidth="2" />
                    <path d="M1 8h19v18H1z" fill="#000" />
                </svg>
            </div>

            <div className="ml-[3px] flex flex-col">
                <Swatches colors={topColors} />
                <Swatches colors={bottomColors} />
            </div>

        </div>
    );
}

function Swatches({ colors }) {

    return (

        <div className="flex h-[26px]">
            {colors.map((color) => (
                <div key={color} className="w-[27px] h-[26px] pt-px pl-[1px] border-r-[3px] border-b-[3px] border-[#fbfaf5] bg-[#8e8c80]">
                    <div
                        className="h-full border-t-2 border-l-2 border-black"
                        style={{ backgroundColor: color }}
                    />
                </div>
            ))}
        </div>
    );
}

function TaskBar() {

    return (

        <div className="h-[23px] shrink-0 flex items-start overflow-hidden whitespace-nowrap bg-[linear-gradient(180deg,#2a5fc8_0px,#4a90ea_3px,#2c67dc_8px,#2259d4_23px)]">

            {/* START */}
            <div className="w-[154px] h-[40px] shrink-0 flex rounded-tr-[12px] bg-[linear-gradient(180deg,#3a7a3a_0px,#6cb86a_4px,#3c943c_12px,#378f37_24px)]">
                <svg width="30" height="30" viewBox="0 0 30 30" className="ml-3 mt-2">
                    <path d="M2 14C4 3 8 0 14 3L12 16z" fill="#f0642c" />
                    <path d="M16 6c4 2 8 2 12-1l-3 14H14z" fill="#84d838" />
                </svg>
                <span className="ml-2 mt-[5px] text-[28px] leading-[34px] font-bold italic text-white tracking-[-0.4px] [text-shadow:1px_1px_2px_#1c4a1c]">
                    start
                </span>
            </div>

            <Task css="ml-[18px] w-[195px]" text="Joseph Nosa..." icon={
                <>
                    <rect x="5" y="1" width="13" height="18" rx="5" fill="#f0bd90" stroke="#1a1a1a" strokeWidth="2" />
                </>
            } />
            <Task css="ml-[4px] w-[195px]" text="RM Learning ..." icon={
                <>
                    <circle cx="13" cy="14" r="8" fill="none" stroke="#7cc4f4" strokeWidth="5" />
                    <path d="M3 20C6 8 14 1 23 2" fill="none" stroke="#f0cc4c" strokeWidth="2.6" />
                </>
            } />
            <Task css="ml-[4px] w-[196px]" text="3 Google C..." icon={
                <>
                    <circle cx="13" cy="12" r="10" fill="#e23a2c" />
                    <path d="M13 9h10c2 5-1 12-8 13z" fill="#f8d43c" />
                    <path d="M3 12l8 10c-5-1-8-5-8-10z" fill="#3ca34a" />
                    <circle cx="13" cy="13" r="4.500" fill="#4a86e8" stroke="#fff" strokeWidth="2" />
                </>
            } />
            <Task css="ml-[3px] w-[197px]" text="Microsoft Po..." icon={
                <>
                    <path d="M6 1h16v18H2V6h4z" fill="#f7c9b4" stroke="#d8502c" strokeWidth="2" />
                    <path d="M5 9h12M8 14h9" stroke="#d8502c" strokeWidth="3" />
                </>
            } />
            <Task css="ml-[3px] w-[198px]" text="Document1 ..." icon={
                <>
                    <path d="M4 1h18v20H4z" fill="#e8eefa" stroke="#4a5c8c" strokeWidth="1.5" />
                    <path d="M2 6l4 12 4-9 4 9 4-12" fill="none" stroke="#2c4c9c" strokeWidth="3" />
                </>
            } />
            <Task css="ml-[2px] w-[200px]" active text="untitled - Paint" icon={
                <>
                    <path d="M5 1l3 20" stroke="#d8643c" strokeWidth="3.500" />
                    <path d="M12 4l1 18" stroke="#d8b87c" strokeWidth="3" />
                    <path d="M19 6l-2 16" stroke="#d8643c" strokeWidth="3" />
                </>
            } />

            <div className="ml-[17px] mt-[11px] w-[23px] h-[24px] shrink-0 bg-[#fdf5a8] border-2 border-black text-[18px] leading-[20px] font-bold text-center">
                ?
            </div>
            <svg width="18" height="14" viewBox="0 0 18 14" className="ml-[17px] mt-[9px] shrink-0">
                <path d="M5 4V1.500h9V8h-4M1.500 5h8v7h-8z" fill="none" stroke="#fff" strokeWidth="2" />
            </svg>

            {/* TRAY */}
            <div className="ml-auto w-[246px] h-[40px] shrink-0 flex border-l border-[#1a4c9c] bg-[linear-gradient(180deg,#1472c8_0px,#1cb4f8_3px,#129cee_9px,#0f8ce4_23px)]">
                <svg width="144" height="23" viewBox="0 0 144 23" className="ml-5">
                    <rect x="4" y="12" width="12" height="16" rx="5" fill="#d8965c" stroke="#3a2a1c" strokeWidth="1.500" />
                    <path d="M29 23l11-13 1 13z" fill="#f4e83c" stroke="#222" strokeWidth="1.500" />
                    <path d="M40 10v13" stroke="#fff" strokeWidth="3" />
                    <path d="M61 23l3-5 6-4 5 4 6 5z" fill="#e8eef6" />
                    <rect x="88" y="10" width="25" height="20" fill="#f8fbff" />
                    <path d="M94 22c2-5 7-5 12-4" stroke="#8c98a8" strokeWidth="2" fill="none" />
                    <rect x="122" y="12" width="20" height="18" fill="#1464b4" stroke="#fff" strokeWidth="3" />
                    <path d="M129 23v-6h8" stroke="#fff" strokeWidth="2" fill="none" />
                </svg>
                <span className="ml-[11px] mt-[13px] text-[17px] leading-[24px] text-white tracking-[0.4px]">
                    12:56
                </span>
            </div>

        </div>
    );
}

function Task({ css, text, icon, active }) {

    return (

        <div className={`mt-[5px] h-[34px] shrink-0 flex rounded-t-[4px] overflow-hidden ${active ? "bg-[#1b4fb8] shadow-[inset_2px_2px_2px_#123a8c]" : "bg-[linear-gradient(180deg,#5a9af8_0px,#3c80f4_4px,#3a7af0_20px)]"} ${css}`}>
            <svg width="26" height="24" viewBox="0 0 26 24" className="ml-[18px] mt-[6px] shrink-0">
                {icon}
            </svg>
            <span className="ml-[4px] mt-[8px] text-[17px] leading-[24px] text-white tracking-[0.1px]">
                {text}
            </span>
        </div>
    );
}
